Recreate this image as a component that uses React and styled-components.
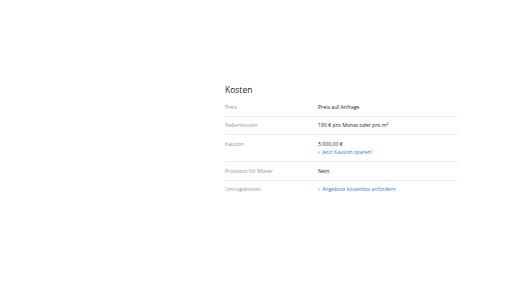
import styled, { createGlobalStyle } from "styled-components";

const GlobalStyle = createGlobalStyle`
  body {
    margin: 0;
    background: #fff;
    font-family: "Open Sans", "Liberation Sans", sans-serif;
  }
`;

const Page = styled.div`
  width: 516px;
  height: 290px;
  padding: 83px 0 0 225px;
  box-sizing: border-box;
`;

const Section = styled.section`
  width: 233px;
`;

const Title = styled.h2`
  margin: 0 0 2px;
  font-size: 8.5px;
  line-height: 13px;
  font-weight: 400;
  color: #222;
`;

const Row = styled.div`
  display: grid;
  grid-template-columns: 93px 1fr;
  padding: 4.5px 0;
  border-bottom: ${(p) => (p.$last ? "none" : "1px solid #ececec")};
  font-size: 5.2px;
  line-height: 8.5px;
`;

const Label = styled.div`
  color: #959595;
`;

const Value = styled.div`
  color: #222;
`;

const Link = styled.a`
  display: block;
  color: #2f7ccf;
  text-decoration: none;
  cursor: pointer;

  &::before {
    content: "›";
    color: #f39200;
    font-weight: 700;
    font-size: 6px;
    margin-right: 2px;
  }
`;

const rows = [
  { label: "Preis", value: "Preis auf Anfrage" },
  { label: "Nebenkosten", value: "190 € pro Monat oder pro m²" },
  { label: "Kaution", value: "5.000,00 €", link: "Jetzt Kaution sparen!" },
  { label: "Provision für Mieter", value: "Nein" },
  { label: "Umzugskosten", link: "Angebote kostenlos anfordern" },
];

export default function App() {
  return (
    <>
      <GlobalStyle />
      <Page>
        <Section>
          <Title>Kosten</Title>
          {rows.map((r, i) => (
            <Row key={r.label} $last={i === rows.length - 1}>
              <Label>{r.label}</Label>
              <Value>
                {r.value && <div>{r.value}</div>}
                {r.link && <Link>{r.link}</Link>}
              </Value>
            </Row>
          ))}
        </Section>
      </Page>
    </>
  );
}
